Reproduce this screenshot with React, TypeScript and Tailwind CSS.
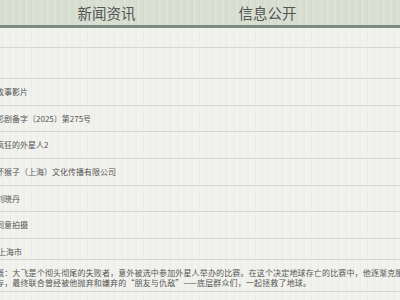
export default function App() {
    const nav = ['新闻资讯', '信息公开', '办事服务'];

    const rows = [
        '故事影片',
        '影剧备字〔2025〕第275号',
        '疯狂的外星人2',
        '坏猴子（上海）文化传播有限公司',
        '刘晓丹',
        '同意拍摄',
    ];

    return (
        <div
            className="w-[400px] h-[300px] overflow-hidden bg-[#f0f1ec] bg-[repeating-linear-gradient(90deg,#f0f1ec_0px,#f0f1ec_3px,#ecede7_3px,#ecede7_4px,#f2f3ee_4px,#f2f3ee_7px)] text-[#555]"
            style={{ fontFamily: '"Noto Sans CJK SC", "Noto Sans", sans-serif' }}
        >
            {/* Header nav */}
            <div className="h-[28px] bg-[#d8dfd1] bg-[repeating-linear-gradient(90deg,#d8dfd1_0px,#d8dfd1_3px,#d3dacc_3px,#d3dacc_4px,#dbe1d4_4px,#dbe1d4_7px)] border-b-[3px] border-[#7a8b7f] flex pl-[26px]">
                {nav.map((item) => (
                    <div
                        key={item}
                        className="w-[161px] shrink-0 text-center text-[14.5px] leading-[26px] text-[#555] whitespace-nowrap"
                    >
                        {item}
                    </div>
                ))}
            </div>

            {/* Detail rows */}
            <div className="mt-[19px] border-t border-[#d6d8d2]">
                <div className="h-[31.3px] border-b border-[#d6d8d2]" />
                {rows.map((r) => (
                    <div
                        key={r}
                        className="h-[26.57px] border-b border-[#d6d8d2] pt-[8px] ml-[-4px] text-[8px] leading-[10px] whitespace-nowrap"
                    >
                        {r}
                    </div>
                ))}
                <div className="h-[21.5px] border-b border-[#d6d8d2] pt-[8px] ml-[-2px] text-[8px] leading-[10px] whitespace-nowrap">
                    上海市
                </div>
                <div className="h-[32px] border-b border-[#d6d8d2] pt-[7.5px] ml-[-4px] text-[8px] leading-[10px] tracking-[0.15px] whitespace-nowrap">
                    <div>概：大飞是个彻头彻尾的失败者，意外被选中参加外星人举办的比赛。在这个决定地球存亡的比赛中，他逐渐克服自身的弱点</div>
                    <div>存，最终联合曾经被他抛弃和嫌弃的“朋友与仇敌”——底层群众们，一起拯救了地球。</div>
                </div>
            </div>
        </div>
    );
}
